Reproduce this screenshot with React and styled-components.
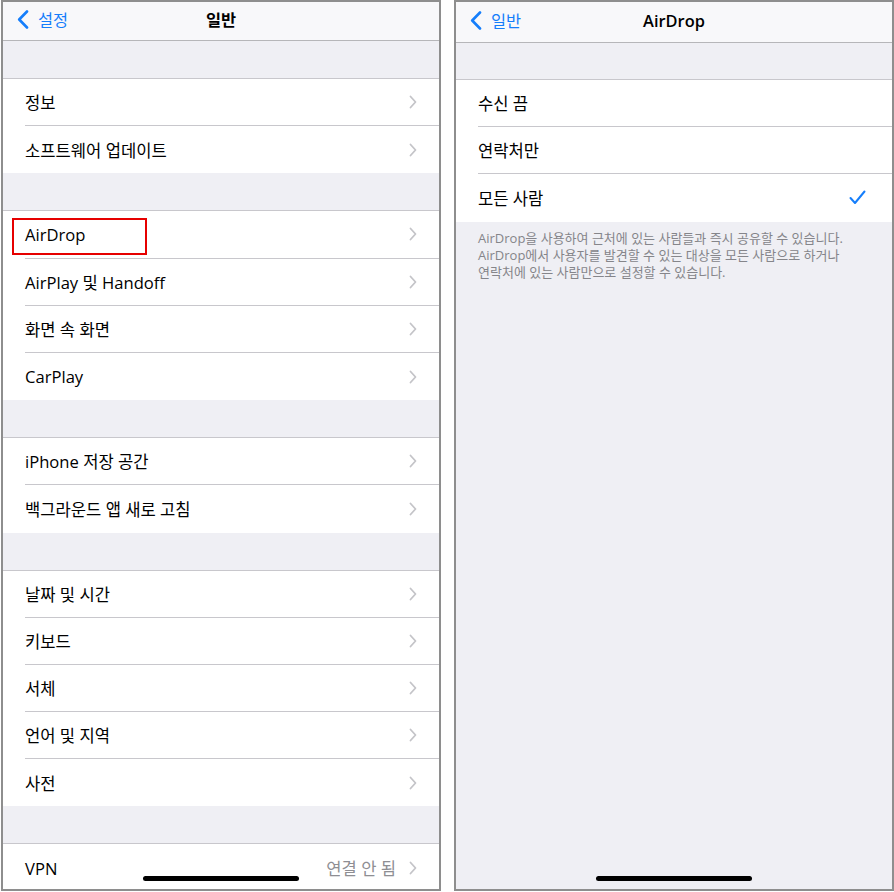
import React from 'react'
import styled, { createGlobalStyle } from 'styled-components'

const GlobalStyle = createGlobalStyle`
  body {
    margin: 0;
    background: #ffffff;
    font-family: "Open Sans", "Noto Sans CJK KR", sans-serif;
    -webkit-font-smoothing: antialiased;
  }
`

const Page = styled.div`
  display: flex;
  gap: 13px;
  padding-left: 1px;
`

const Phone = styled.div`
  position: relative;
  width: 440px;
  height: 891px;
  box-sizing: border-box;
  border: 2px solid #8e8e8e;
  background: #efeff4;
  overflow: hidden;
  display: flex;
  flex-direction: column;
`

const NavBar = styled.div`
  flex: none;
  height: ${(p) => p.$height}px;
  box-sizing: border-box;
  padding: 0 14px 4px;
  background: #f8f8fa;
  border-bottom: 1px solid #b6b6b9;
  display: grid;
  grid-template-columns: 1fr auto 1fr;
  align-items: center;
`

const Back = styled.div`
  display: flex;
  align-items: center;
  gap: 9px;
  color: #157efb;
  font-size: 16.4px;
`

const Title = styled.div`
  font-size: 16.4px;
  font-weight: 600;
  color: #000;
`

const Group = styled.div`
  flex: none;
  margin-top: ${(p) => p.$gap}px;
  background: #ffffff;
  border-top: 1px solid #c8c7cc;
`

const Row = styled.div`
  position: relative;
  height: 47.2px;
  box-sizing: border-box;
  padding-left: 22px;
  display: flex;
  &:last-child > div {
    border-bottom: none;
  }
`

const RowInner = styled.div`
  flex: 1;
  display: flex;
  align-items: center;
  justify-content: space-between;
  padding-right: ${(p) => p.$pr || 22}px;
  border-bottom: 1px solid #c8c7cc;
  font-size: 16.6px;
  color: #000;
`

const Trail = styled.div`
  display: flex;
  align-items: center;
  gap: 13px;
  color: #8e8e93;
`

const Highlight = styled.div`
  position: absolute;
  left: 9px;
  top: 7px;
  width: 135px;
  height: 37px;
  box-sizing: border-box;
  border: 2px solid #e60000;
`

const Footer = styled.div`
  padding: 8px 22px;
  font-size: 13px;
  line-height: 17px;
  color: #85858a;
`

const HomeBar = styled.div`
  position: absolute;
  left: 50%;
  bottom: 8px;
  width: 156px;
  height: 5px;
  margin-left: -78px;
  border-radius: 3px;
  background: #000;
`

const Chevron = () => (
  <svg width="8" height="14" viewBox="0 0 8 14">
    <polyline points="1.5,1.5 6.5,7 1.5,12.5" fill="none" stroke="#c4c4c8" strokeWidth="1.8" strokeLinecap="round" strokeLinejoin="round" />
  </svg>
)

const BackChevron = () => (
  <svg width="12" height="19" viewBox="0 0 12 19">
    <polyline points="10,1.5 2.2,9.5 10,17.5" fill="none" stroke="#157efb" strokeWidth="2.6" strokeLinecap="round" strokeLinejoin="round" />
  </svg>
)

const Check = () => (
  <svg width="17" height="15" viewBox="0 0 17 15">
    <polyline points="1.5,8 6,13 15.5,1.5" fill="none" stroke="#157efb" strokeWidth="2" strokeLinecap="round" strokeLinejoin="round" />
  </svg>
)

const generalGroups = [
  ['정보', '소프트웨어 업데이트'],
  ['AirDrop', 'AirPlay 및 Handoff', '화면 속 화면', 'CarPlay'],
  ['iPhone 저장 공간', '백그라운드 앱 새로 고침'],
  ['날짜 및 시간', '키보드', '서체', '언어 및 지역', '사전'],
]

const Nav = ({ back, title, height }) => (
  <NavBar $height={height}>
    <Back>
      <BackChevron />
      {back}
    </Back>
    <Title>{title}</Title>
    <div />
  </NavBar>
)

export default function App() {
  return (
    <Page>
      <GlobalStyle />
      <Phone>
        <Nav back="설정" title="일반" height={39} />
        {generalGroups.map((group, gi) => (
          <Group key={gi} $gap={37}>
            {group.map((label) => (
              <Row key={label}>
                {label === 'AirDrop' && <Highlight />}
                <RowInner>
                  {label}
                  <Chevron />
                </RowInner>
              </Row>
            ))}
          </Group>
        ))}
        <Group $gap={37}>
          <Row>
            <RowInner>
              VPN
              <Trail>
                연결 안 됨
                <Chevron />
              </Trail>
            </RowInner>
          </Row>
        </Group>
        <HomeBar />
      </Phone>
      <Phone>
        <Nav back="일반" title="AirDrop" height={41} />
        <Group $gap={36}>
          <Row>
            <RowInner>수신 끔</RowInner>
          </Row>
          <Row>
            <RowInner>연락처만</RowInner>
          </Row>
          <Row>
            <RowInner $pr={26}>
              모든 사람
              <Check />
            </RowInner>
          </Row>
        </Group>
        <Footer>
          AirDrop을 사용하여 근처에 있는 사람들과 즉시 공유할 수 있습니다.
          <br />
          AirDrop에서 사용자를 발견할 수 있는 대상을 모든 사람으로 하거나
          <br />
          연락처에 있는 사람만으로 설정할 수 있습니다.
        </Footer>
        <HomeBar />
      </Phone>
    </Page>
  )
}
